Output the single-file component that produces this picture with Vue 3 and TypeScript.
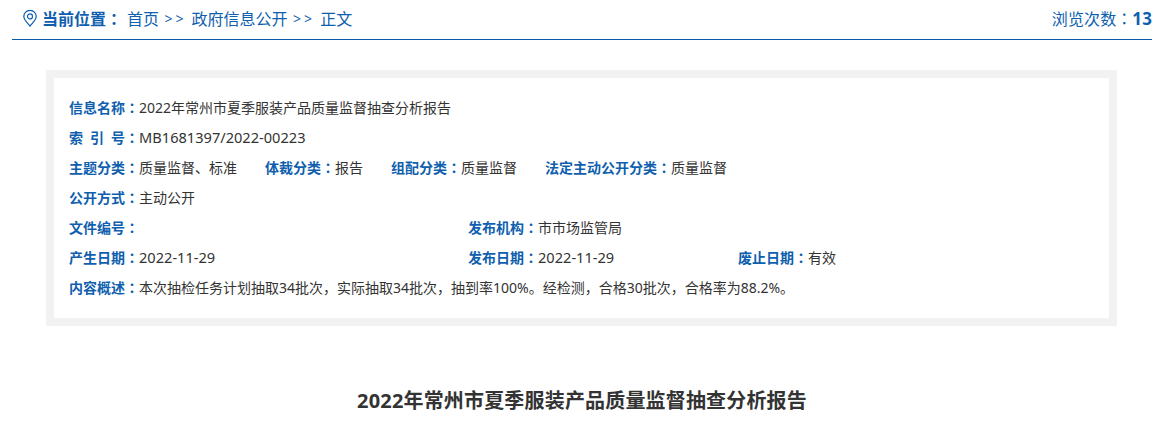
<script setup lang="ts">
interface Field { label: string; value: string; width?: number; latin?: boolean }
const rows: { fields: Field[]; grid?: boolean }[] = [
  { fields: [{ label: '信息名称', value: '2022年常州市夏季服装产品质量监督抽查分析报告' }] },
  { fields: [{ label: '索 引 号', value: 'MB1681397/2022-00223', latin: true }] },
  { fields: [
    { label: '主题分类', value: '质量监督、标准' },
    { label: '体裁分类', value: '报告' },
    { label: '组配分类', value: '质量监督' },
    { label: '法定主动公开分类', value: '质量监督' },
  ] },
  { fields: [{ label: '公开方式', value: '主动公开' }] },
  { grid: true, fields: [
    { label: '文件编号', value: '', width: 399 },
    { label: '发布机构', value: '市市场监管局', width: 270 },
  ] },
  { grid: true, fields: [
    { label: '产生日期', value: '2022-11-29', width: 399, latin: true },
    { label: '发布日期', value: '2022-11-29', width: 270, latin: true },
    { label: '废止日期', value: '有效' },
  ] },
  { fields: [{ label: '内容概述', value: '本次抽检任务计划抽取34批次，实际抽取34批次，抽到率100%。经检测，合格30批次，合格率为88.2%。' }] },
]
</script>

<template>
  <div class="page">
    <header class="crumbs">
      <div class="trail">
        <svg class="pin" width="14" height="17" viewBox="0 0 14 17" fill="none" stroke="currentColor" stroke-width="1.2">
          <path d="M7 16.200C4.800 13.300 .8 9.800 .8 6.500a6.200 6.200 0 0 1 12.400 0c0 3.300-4 6.800-6.200 9.700z" />
          <circle cx="7" cy="6.400" r="2.500" />
        </svg>
        <strong class="here">当前位置<span class="colon">：</span></strong>
        <span>首页</span>
        <span class="sep">&gt;&gt;</span>
        <span>政府信息公开</span>
        <span class="sep">&gt;&gt;</span>
        <span>正文</span>
      </div>
      <div class="views">浏览次数<span class="colon">：</span><strong>13</strong></div>
    </header>

    <section class="info">
      <div v-for="(row, i) in rows" :key="i" class="row" :class="{ spaced: !row.grid }">
        <div
          v-for="f in row.fields"
          :key="f.label"
          class="field"
          :style="f.width ? { width: f.width + 'px' } : undefined"
        >
          <b class="label">{{ f.label }}<span class="colon">：</span></b><span :class="{ latin: f.latin }">{{ f.value }}</span>
        </div>
      </div>
    </section>

    <h1 class="title">2022年常州市夏季服装产品质量监督抽查分析报告</h1>
  </div>
</template>

<style>
body { background: #fff; }
</style>

<style scoped>
.page {
  padding: 0 8px 0 12px;
  font-family: "Noto Sans", "Noto Sans CJK SC", sans-serif;
  color: #333;
  overflow: hidden;
}
.crumbs {
  display: flex;
  justify-content: space-between;
  align-items: center;
  height: 36px;
  padding-bottom: 3px;
  border-bottom: 1px solid #0b5aa6;
  font-size: 16px;
  color: #0f5fae;
}
.trail {
  display: flex;
  align-items: center;
  padding-left: 10px;
}
.pin { margin: 0 5px 0 1px; }
.here { margin-right: 5px; }
.colon { font-family: "Noto Sans CJK TC", sans-serif; }
.sep { margin: 0 5px 0 5.500px; font-size: 14px; letter-spacing: 3px; }
.views { letter-spacing: .1px; }
.views strong { font-size: 17px; }
.info {
  margin: 30px 35px 0 34px;
  border: 8px solid #f2f2f2;
  padding: 14px 15px 16px;
  font-size: 14px;
}
.row {
  display: flex;
  line-height: 30px;
  height: 30px;
  white-space: nowrap;
}
.row.spaced { gap: 28px; }
.label { color: #0f5fae; font-weight: 700; word-spacing: 3.400px; }
.latin { font-size: 14.600px; }
.title {
  margin: 59px 0 0;
  font-size: 20px;
  line-height: 32px;
  font-weight: 700;
  letter-spacing: .17px;
  text-align: center;
  color: #333;
}
</style>
